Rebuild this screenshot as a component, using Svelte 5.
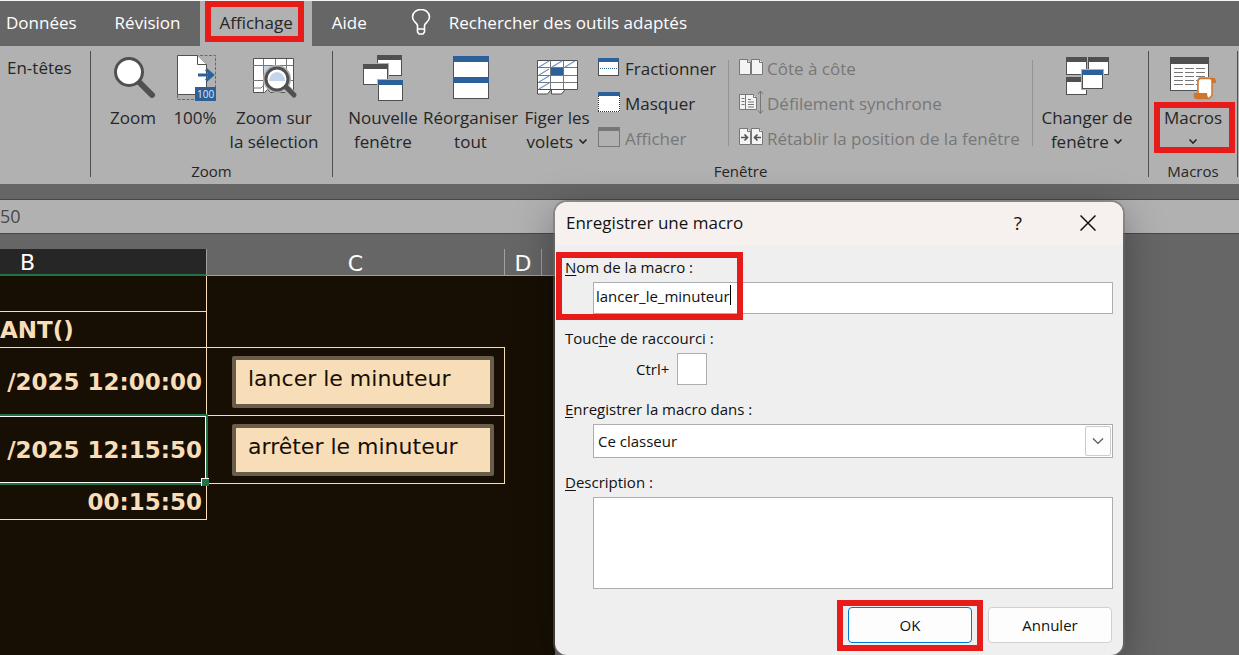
<script lang="ts">
  let macroName = $state('lancer_le_minuteur');
  let shortcut = $state('');
  let description = $state('');

  const tabs = [
    { name: 'Données', active: false },
    { name: 'Révision', active: false },
    { name: 'Affichage', active: true },
    { name: 'Aide', active: false },
  ];
</script>

{#snippet chevron()}
  <svg class="chevron" width="10" height="8" viewBox="0 0 10 8">
    <path d="M1.5 1.500l3.500 3.500 3.500-3.500" fill="none" stroke="#262626" stroke-width="1.600" />
  </svg>
{/snippet}

{#snippet win(x: number, y: number, w: number, h: number, color: string)}
  <rect x={x - 1} y={y - 1} width={w + 2} height={h + 2} fill="#b1b1b1" />
  <rect x={x + 0.5} y={y + 0.5} width={w - 1} height={h - 1} fill="#fff" stroke="#505050" />
  <rect {x} {y} width={w} height="5" fill={color} />
{/snippet}

<div class="excel">
  <nav class="tabs">
    {#each tabs as tab}
      <button class="tab" class:active={tab.active}>
        {tab.name}
        {#if tab.active}<span class="mark"></span>{/if}
      </button>
    {/each}
    <button class="tell-me">
      <svg width="20" height="28" viewBox="0 0 20 28" fill="none" stroke="#fff" stroke-width="1.6">
        <path d="M6.500 20v-3.500c0-2-5-4-5-8.500a8.500 7.500 0 0 1 17 0c0 4.500-5 6.500-5 8.500V20zM6.500 20v3l1.500 2h4l1.500-2v-3" />
      </svg>
      Rechercher des outils adaptés
    </button>
  </nav>

  <div class="ribbon">
    <section class="group headings">
      <button class="text-btn">En-têtes</button>
    </section>

    <section class="group zoom">
      <div class="tools">
        <button class="big">
          <svg width="48" height="55" viewBox="0 -3 48 55">
            <path d="M30 28l13 13" stroke="#505050" stroke-width="6" stroke-linecap="round" />
            <circle cx="20" cy="18" r="13.500" fill="#fff" stroke="#505050" stroke-width="3" />
          </svg>
          Zoom
        </button>
        <button class="big">
          <svg width="48" height="55" viewBox="0 -3 48 55">
            <rect x="6.500" y="1.500" width="38" height="44" fill="none" stroke="#6a6a6a" stroke-dasharray="3 1.500" />
            <path d="M6.500 1.500h20l9 9v30h-29z" fill="#fff" stroke="#505050" />
            <path d="M26.500 1.500v9h9" fill="#fff" stroke="#505050" />
            <path d="M27 21h14M35 15.500l6.500 5.500-6.500 5.500" fill="none" stroke="#2b6099" stroke-width="3" />
            <rect x="24" y="33" width="21" height="14" fill="#2b6099" />
            <text class="badge" x="26" y="44">100</text>
          </svg>
          100%
        </button>
        <button class="big">
          <svg width="48" height="55" viewBox="0 -3 48 55">
            <path d="M3.500 4.500h40v34h-23l-3-3-3 3h-11z" fill="#fff" stroke="#505050" />
            <path d="M3 11.500h40M3 26.500h40M13.500 5v33M25.500 5v8M36.500 5v33M3 34h8l3-3" fill="none" stroke="#777" />
            <rect x="14" y="12" width="10" height="8" fill="#c3d5ea" />
            <path d="M35 33l9 9" stroke="#b1b1b1" stroke-width="8" />
            <circle cx="27" cy="25" r="14" fill="#b1b1b1" />
            <path d="M36 33l8 8" stroke="#505050" stroke-width="5" stroke-linecap="round" />
            <circle cx="27" cy="25" r="11" fill="#fff" stroke="#505050" stroke-width="3" />
            <path d="M19 27a8 9 0 0 1 16 0z" fill="#c3d5ea" />
          </svg>
          <span>Zoom sur<br />la sélection</span>
        </button>
      </div>
      <h2>Zoom</h2>
    </section>

    <section class="group window">
      <div class="tools">
        <button class="big">
          <svg width="48" height="55" viewBox="0 -3 48 55">
            {@render win(18, 1, 25, 21, '#505050')}
            {@render win(4, 10, 25, 21, '#505050')}
            {@render win(19, 26, 25, 21, '#2b6099')}
          </svg>
          <span>Nouvelle<br />fenêtre</span>
        </button>
        <button class="big">
          <svg width="48" height="55" viewBox="0 -3 48 55">
            <rect x="6.500" y="2.500" width="35" height="42" fill="#fff" stroke="#505050" />
            <rect x="6" y="2" width="36" height="6" fill="#2b6099" />
            <rect x="6" y="23" width="36" height="6" fill="#2b6099" />
          </svg>
          <span>Réorganiser<br />tout</span>
        </button>
        <button class="big">
          <svg width="48" height="55" viewBox="0 -3 48 55">
            <path d="M4.500 35v5h10l4-5v5h10l4-5" fill="#fff" stroke="#505050" />
            <path d="M4.500 6.500h40v29h-40z" fill="#fff" stroke="#505050" />
            <path d="M5 13.500h39M5 21.500h39M5 28.500h39M17.500 7v28M30.500 7v28" stroke="#777" />
            <rect x="18" y="14" width="12" height="7" fill="#2b6099" />
            <path d="M6 13l10-6M19 13l10-6M32 13l10-6M6 21l10-6M6 28l10-6M6 35l10-6" stroke="#6d9ac8" stroke-width="1.300" />
          </svg>
          <span>Figer les<br />volets {@render chevron()}</span>
        </button>

        <div class="stack">
          <button class="small">
            <svg width="24" height="25" viewBox="0 0 24 25">
              <rect x=".5" y="2.500" width="20" height="17" fill="#fff" stroke="#505050" />
              <rect y="2" width="21" height="4" fill="#2b6099" />
              <path d="M2 12.500h17" stroke="#2b6099" stroke-dasharray="1 1" />
            </svg>
            Fractionner
          </button>
          <button class="small">
            <svg width="24" height="25" viewBox="0 0 24 25">
              <rect y="1" width="22" height="20" fill="#fff" />
              <path d="M.5 5v15.500M0 20.500h22M21.500 5v15.500" stroke="#333" stroke-dasharray="1 1" />
              <rect y="1" width="22" height="4" fill="#2b6099" />
            </svg>
            Masquer
          </button>
          <button class="small" disabled>
            <svg width="24" height="25" viewBox="0 0 24 25">
              <rect x=".5" y="1.500" width="21" height="19" fill="none" stroke="#777" />
              <rect y="1" width="22" height="4" fill="#777" />
            </svg>
            Afficher
          </button>
        </div>

        <div class="stack side">
          <button class="small" disabled>
            <svg width="25" height="25" viewBox="0 0 25 25" fill="#f4f4f4" stroke="#777">
              <path d="M.5 3.500h8l3 3v12H.5zM12.500 3.500h8l3 3v12h-11z" />
              <path d="M8.500 3.500v3h3M20.500 3.500v3h3" />
            </svg>
            Côte à côte
          </button>
          <button class="small" disabled>
            <svg width="25" height="25" viewBox="0 0 25 25" fill="#f4f4f4" stroke="#777">
              <path d="M.5 3.500h6v15h-6zM6.500 3.500h8l3 3v12h-11z" />
              <path d="M14.500 3.500v3h3M2.500 7.500h3M2.500 10.500h3M2.500 13.500h3M9 8.500h3M9 11h6M9 13.500h6M9 16h6" />
              <path d="M21.500 0v22M19 3l2.500-3 2.500 3M19 19.500l2.500 3 2.500-3" fill="none" />
            </svg>
            Défilement synchrone
          </button>
          <button class="small" disabled>
            <svg width="25" height="25" viewBox="0 0 25 25" fill="#f4f4f4" stroke="#777">
              <path d="M.5 2.500h8l3 3v13H.5zM12.500 2.500h8l3 3v13h-11z" />
              <path d="M8.500 2.500v3h3M20.500 2.500v3h3" />
              <path d="M2 11.500h6M5.500 8.500l3 3-3 3M22 11.500h-6M18.500 8.500l-3 3 3 3" fill="none" stroke="#555" stroke-width="1.700" />
            </svg>
            Rétablir la position de la fenêtre
          </button>
        </div>

        <button class="big">
          <svg width="48" height="55" viewBox="0 -3 48 55">
            {@render win(3, 3, 21, 18, '#505050')}
            {@render win(25, 3, 21, 18, '#505050')}
            {@render win(3, 23, 21, 18, '#505050')}
            {@render win(19, 16, 21, 19, '#2b6099')}
          </svg>
          <span>Changer de<br />fenêtre {@render chevron()}</span>
        </button>
      </div>
      <h2>Fenêtre</h2>
    </section>

    <section class="group macros">
      <div class="tools">
        <button class="big">
          <svg width="48" height="55" viewBox="0 -3 48 55">
            <rect x="1.500" y="3.500" width="38" height="33" fill="#fff" stroke="#505050" />
            <rect x="1" y="3" width="39" height="7" fill="#505050" />
            <path d="M5 14.500h31M5 18.500h31M5 22.500h31M5 26.500h31M5 30.500h31" stroke="#777" stroke-dasharray="9 2" />
            <path d="M30 23h17v8h-3v11l-3 4H24v-8h4V26z" fill="#b1b1b1" />
            <path d="M32 24.500h11v17l-3 3H29v-16c0-3 1-4 3-4z" fill="#fff" stroke="#d0752d" stroke-width="1.500" />
            <path d="M32 24h12c3 0 3 2 3 5h-4c0-3-1-4-3-4h-8zM25 39h13c0 3 1 5 3 6H28c-3 0-4-2-3-6z" fill="#d0752d" />
          </svg>
          <span class="caption">Macros<br />{@render chevron()}<span class="mark"></span></span>
        </button>
      </div>
      <h2>Macros</h2>
    </section>
  </div>

  <div class="formula-bar">50</div>

  <div class="grid">
    <table class="sheet">
      <thead>
        <tr><th class="col-b">B</th><th class="col-c">C</th><th class="col-d">D</th><th></th></tr>
      </thead>
      <tbody>
        <tr><td class="line"></td><td></td><td></td><td></td></tr>
        <tr><td class="line name">ANT()</td><td class="under"></td><td></td><td></td></tr>
        <tr class="tall">
          <td class="line">/2025 12:00:00</td>
          <td class="line"><button class="macro-btn">lancer le minuteur</button></td>
          <td></td><td></td>
        </tr>
        <tr class="tall">
          <td class="line">/2025 12:15:50<span class="outline"></span></td>
          <td class="line"><button class="macro-btn">arrêter le minuteur</button></td>
          <td></td><td></td>
        </tr>
        <tr><td class="line">00:15:50</td><td></td><td></td><td></td></tr>
      </tbody>
    </table>
  </div>

  <div class="dialog" role="dialog" aria-labelledby="dialog-title">
    <header>
      <h1 id="dialog-title">Enregistrer une macro</h1>
      <button class="help">?</button>
      <button class="close" aria-label="Fermer">
        <svg width="16" height="16" viewBox="0 0 16 16">
          <path d="M.5.5l15 15M15.500.5l-15 15" stroke="#111" stroke-width="1.500" />
        </svg>
      </button>
    </header>

    <form onsubmit={(e) => e.preventDefault()}>
      <div class="field">
        <label for="macro-name"><u>N</u>om de la macro :</label>
        <div class="control">
          <input id="macro-name" type="text" bind:value={macroName} />
          <span class="caret"></span>
        </div>
        <span class="mark"></span>
      </div>

      <div class="field">
        <label for="shortcut">Touc<u>h</u>e de raccourci :</label>
        <div class="control key">
          <span>Ctrl+</span>
          <input id="shortcut" type="text" maxlength="1" bind:value={shortcut} />
        </div>
      </div>

      <div class="field">
        <label for="target"><u>E</u>nregistrer la macro dans :</label>
        <div class="control">
          <select id="target">
            <option>Ce classeur</option>
          </select>
          <span class="drop">
            <svg width="12" height="8" viewBox="0 0 12 8">
              <path d="M1 1.500l5 5 5-5" fill="none" stroke="#555" stroke-width="1.200" />
            </svg>
          </span>
        </div>
      </div>

      <div class="field">
        <label for="description"><u>D</u>escription :</label>
        <div class="control">
          <textarea id="description" bind:value={description}></textarea>
        </div>
      </div>

      <footer>
        <button class="action primary" type="submit">OK<span class="mark"></span></button>
        <button class="action" type="button">Annuler</button>
      </footer>
    </form>
  </div>
</div>

<style>
  :global(body) {
    overflow: hidden;
  }

  .excel {
    position: relative;
    min-height: 100vh;
    overflow: hidden;
    display: flex;
    flex-direction: column;
    background: #666;
    color: #262626;
    font-family: "Open Sans", "Noto Sans", sans-serif;
    font-size: 17px;
  }

  .excel * {
    box-sizing: border-box;
  }

  button {
    font: inherit;
    color: inherit;
    background: none;
    border: none;
    padding: 0;
    white-space: nowrap;
  }

  svg {
    flex: none;
  }

  h1,
  h2 {
    margin: 0;
    font-weight: 400;
  }

  /* Red frame drawn around the parts to click */
  .mark {
    position: absolute;
    border: 6px solid #e81b1b;
    pointer-events: none;
    z-index: 2;
  }

  .tabs {
    display: flex;
    height: 46px;
    border-top: 1px solid #f4f4f4;
    color: #fff;
  }

  .tab {
    position: relative;
    padding: 0 20px 2px;
  }

  .tab:first-child {
    padding: 0 18px 2px 6px;
  }

  .tab.active {
    background: #b1b1b1;
    color: #262626;
    padding: 0 19px 2px;
  }

  .tab .mark {
    inset: 0 8px 4px 5px;
  }

  .tell-me {
    display: flex;
    align-items: center;
    gap: 18px;
    margin-left: 24px;
    padding-bottom: 2px;
  }

  .ribbon {
    display: flex;
    height: 138px;
    padding: 5px 0 7px;
    background: #b1b1b1;
  }

  .group {
    display: flex;
    flex-direction: column;
    justify-content: space-between;
    border-right: 1px solid #505050;
  }

  .group h2 {
    font-size: 15px;
    line-height: 12px;
    text-align: center;
  }

  .headings {
    width: 91px;
  }

  .text-btn {
    align-self: flex-start;
    padding-left: 7px;
    line-height: 34px;
  }

  .tools {
    display: flex;
  }

  .big {
    display: flex;
    flex-direction: column;
    align-items: center;
    line-height: 24px;
  }

  .zoom {
    width: 242px;
  }

  .zoom .tools {
    display: grid;
    grid-template-columns: 60px 64px 94px;
    padding-left: 12px;
  }

  .window {
    width: 816px;
  }

  .window .tools {
    display: grid;
    grid-template-columns: 70px 105px 68px 138px 304px 108px;
    padding-left: 15px;
  }

  .chevron {
    vertical-align: 2px;
  }

  .badge {
    font-size: 10px;
    fill: #dfe8f2;
  }

  .stack {
    display: flex;
    flex-direction: column;
    padding-left: 7px;
    background: linear-gradient(#949494, #949494) right 9px / 1px 86px no-repeat;
  }

  .stack.side {
    padding-left: 10px;
  }

  .small {
    display: flex;
    align-items: center;
    gap: 3px;
    height: 35px;
  }

  .small:disabled {
    color: #777;
  }

  .macros {
    width: 89px;
  }

  .macros .tools {
    justify-content: center;
  }

  .caption {
    position: relative;
  }

  .caption .mark {
    inset: -4px -13px 1px -10px;
  }

  .formula-bar {
    height: 35px;
    margin: 15px 0;
    border: solid #484848;
    border-width: 1px 0;
    background: #b1b1b1;
    color: #484848;
    font-size: 18px;
    line-height: 33px;
  }

  .grid {
    flex: 1;
    width: 555px;
    background: #170f04;
    font-family: Verdana, "DejaVu Sans", sans-serif;
    font-size: 22px;
  }

  .sheet {
    width: 100%;
    border-spacing: 0;
    table-layout: fixed;
  }

  .sheet th {
    height: 27px;
    padding: 3px 0 0;
    border: solid #a0a0a0;
    border-width: 0 1px 1px 0;
    background: #666;
    color: #fff;
    font-weight: 400;
    line-height: 22px;
  }

  .sheet th:last-child {
    border-right: none;
  }

  .sheet .col-b {
    width: 207px;
    padding-right: 151px;
    border-bottom: 2px solid #217346;
    background: #262626;
  }

  .sheet .col-c {
    width: 298px;
  }

  .sheet .col-d {
    width: 37px;
  }

  .sheet td {
    height: 36px;
    padding: 0;
    line-height: 26px;
  }

  .sheet .line {
    position: relative;
    padding-right: 4px;
    border: solid #f7deb8;
    border-width: 0 1px 1px 0;
    color: #f7deb8;
    font-size: 23px;
    font-weight: 700;
    text-align: right;
    white-space: nowrap;
  }

  .sheet .name {
    text-align: left;
  }

  .sheet .under {
    border-bottom: 1px solid #f7deb8;
  }

  .sheet .tall td {
    height: 68px;
  }

  .outline {
    position: absolute;
    inset: -2px -2px -2px -4px;
    border: 2px solid #217346;
    box-shadow: inset 0 0 0 1px #fff;
    z-index: 1;
  }

  .outline::after {
    content: "";
    position: absolute;
    right: -3px;
    bottom: -3px;
    width: 7px;
    height: 7px;
    border: solid #fff;
    border-width: 1px 0 0 1px;
    background: #217346;
  }

  .macro-btn {
    display: block;
    width: 262px;
    height: 52px;
    margin-left: 25px;
    padding: 0 0 6px 12px;
    border: 4px solid #6b5d4b;
    border-radius: 2px;
    background: #f7deb8;
    color: #170f04;
    font-size: 22px;
    font-weight: 400;
    text-align: left;
  }

  .dialog {
    position: absolute;
    top: 202px;
    left: 555px;
    width: 568px;
    border-radius: 12px;
    background: #efefef;
    box-shadow: 0 0 0 2px rgba(110, 110, 110, 0.5), 0 10px 40px rgba(0, 0, 0, 0.35);
    color: #111;
    font-size: 15px;
  }

  .dialog header {
    display: flex;
    align-items: center;
    height: 43px;
    padding: 0 27px 2px 11px;
    border-radius: 12px 12px 0 0;
    background: #f6f1ee;
  }

  .dialog h1 {
    flex: 1;
    font-size: 17px;
  }

  .help {
    margin-right: 58px;
    font-size: 19px;
  }

  .close {
    display: flex;
  }

  form {
    display: flex;
    flex-direction: column;
    gap: 14px;
    padding: 12px 10px;
  }

  .field {
    position: relative;
    display: flex;
    flex-direction: column;
    gap: 5px;
  }

  .field > .mark {
    inset: -5px 370px -6px -9px;
  }

  label {
    line-height: 20px;
  }

  u {
    text-underline-offset: 2px;
  }

  .control {
    position: relative;
    display: flex;
    margin-left: 28px;
  }

  input,
  select,
  textarea {
    width: 100%;
    margin: 0;
    padding: 0 2px 4px;
    border: 1px solid #abadb3;
    border-radius: 0;
    background: #fff;
    color: #111;
    font: inherit;
    outline: none;
  }

  input {
    height: 32px;
  }

  .caret {
    position: absolute;
    top: 3px;
    left: 137px;
    width: 1px;
    height: 20px;
    background: #000;
  }

  .key {
    align-items: center;
    gap: 8px;
    margin-left: 71px;
  }

  .key input {
    width: 30px;
  }

  select {
    height: 34px;
    padding: 0 4px;
    appearance: none;
  }

  .drop {
    position: absolute;
    inset: 2px 2px 2px auto;
    width: 26px;
    display: flex;
    align-items: center;
    justify-content: center;
    border: 1px solid #ccc;
    border-radius: 2px;
    background: #fdfdfd;
    pointer-events: none;
  }

  textarea {
    height: 92px;
    resize: none;
  }

  footer {
    display: flex;
    justify-content: flex-end;
    gap: 16px;
    padding: 4px 1px 0 0;
  }

  .action {
    position: relative;
    width: 124px;
    height: 36px;
    border: 1px solid #d0d0d0;
    border-radius: 4px;
    background: #fdfdfd;
  }

  .action.primary {
    border-color: #0078d4;
  }

  .action .mark {
    inset: -8px -12px -9px;
  }
</style>
